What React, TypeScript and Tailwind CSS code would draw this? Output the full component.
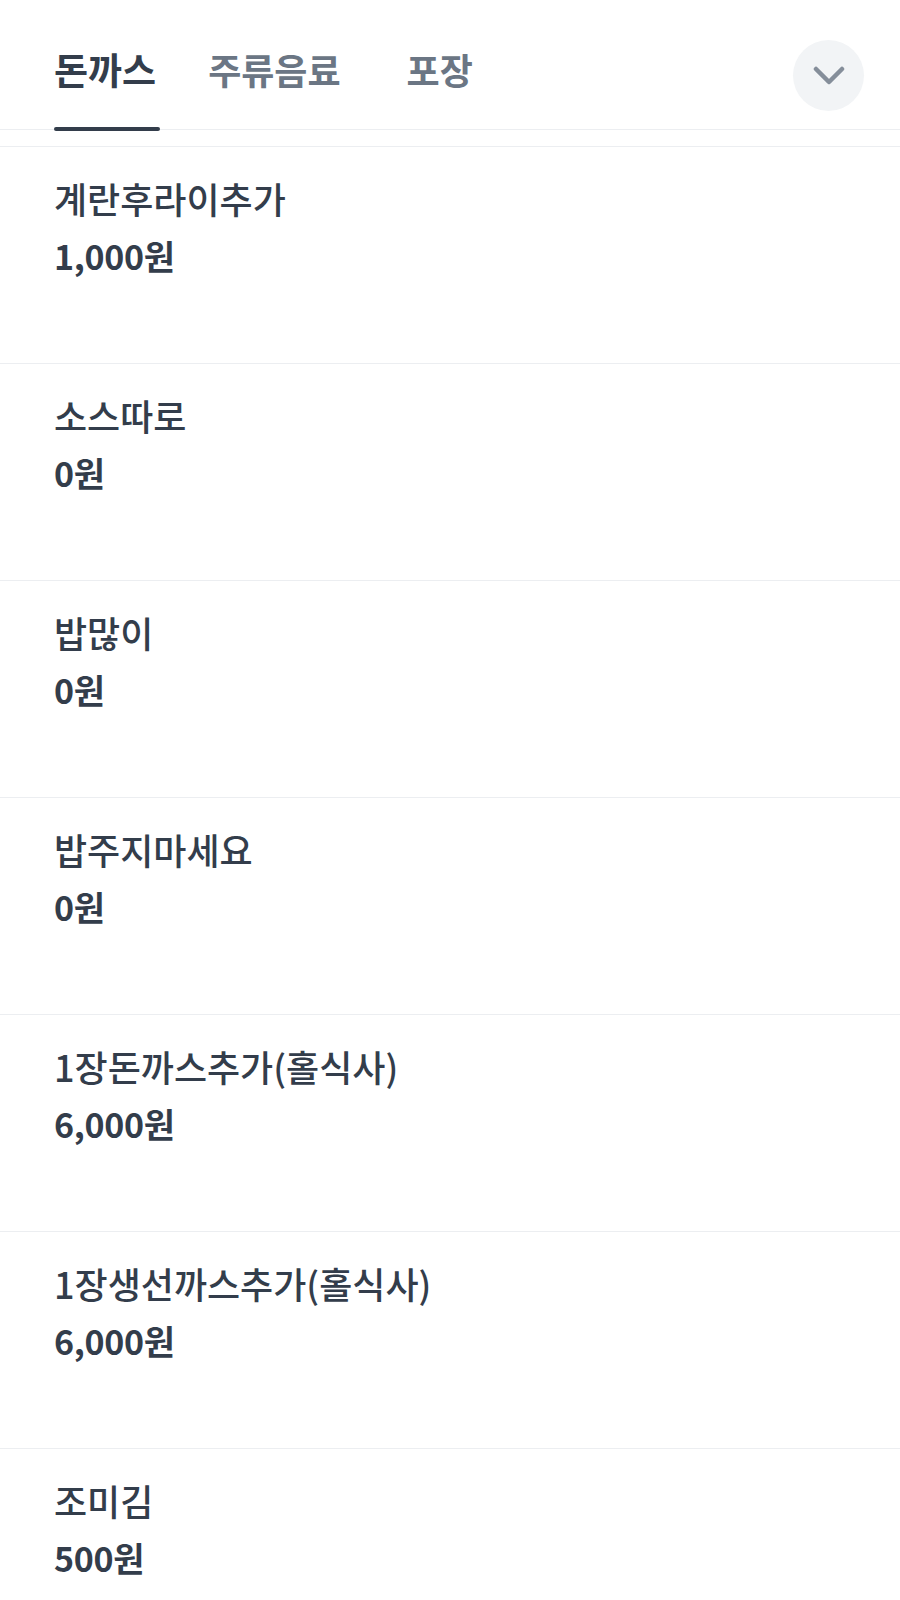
import React from "react";

const items = [
  { name: "계란후라이추가", price: "1,000원" },
  { name: "소스따로", price: "0원" },
  { name: "밥많이", price: "0원" },
  { name: "밥주지마세요", price: "0원" },
  { name: "1장돈까스추가(홀식사)", price: "6,000원" },
  { name: "1장생선까스추가(홀식사)", price: "6,000원" },
  { name: "조미김", price: "500원" },
];

export default function App() {
  return (
    <div
      className="w-[900px] h-[1600px] overflow-hidden bg-white"
      style={{ fontFamily: '"Noto Sans CJK KR", "Noto Sans", sans-serif' }}
    >
      <div className="relative flex items-start h-[130px] border-b border-[#eceef1] pl-[54px] pr-[36px]">
        <div className="relative h-full">
          <div className="mt-[44px] text-[37px] leading-[50px] font-bold text-[#333d4b]">돈까스</div>
          <div className="absolute left-0 right-[-4px] bottom-[-2px] h-[4px] bg-[#333d4b] rounded-full" />
        </div>
        <div className="ml-[52px] mt-[44px] text-[36px] leading-[50px] font-semibold text-[#6b7684]">주류음료</div>
        <div className="ml-[66px] mt-[44px] text-[36px] leading-[50px] font-semibold text-[#6b7684]">포장</div>
        <div className="flex-1" />
        <div className="mt-[40px] w-[71px] h-[71px] rounded-full bg-[#f2f4f6] flex items-center justify-center">
          <svg width="32" height="20" viewBox="0 0 32 20" fill="none">
            <path d="M3 3 L16 16 L29 3" stroke="#858e9a" strokeWidth="4.5" strokeLinecap="round" strokeLinejoin="round" />
          </svg>
        </div>
      </div>
      <div className="h-[16px]" />
      {items.map((it) => (
        <div key={it.name} className="border-t border-[#eceef1] h-[217px] pl-[54px] pt-[26px]">
          <div className="text-[36px] leading-[50px] font-medium text-[#333d4b]">{it.name}</div>
          <div className="mt-[8px] text-[34px] leading-[50px] font-semibold text-[#333d4b] tracking-[-0.3px]">{it.price}</div>
        </div>
      ))}
    </div>
  );
}
